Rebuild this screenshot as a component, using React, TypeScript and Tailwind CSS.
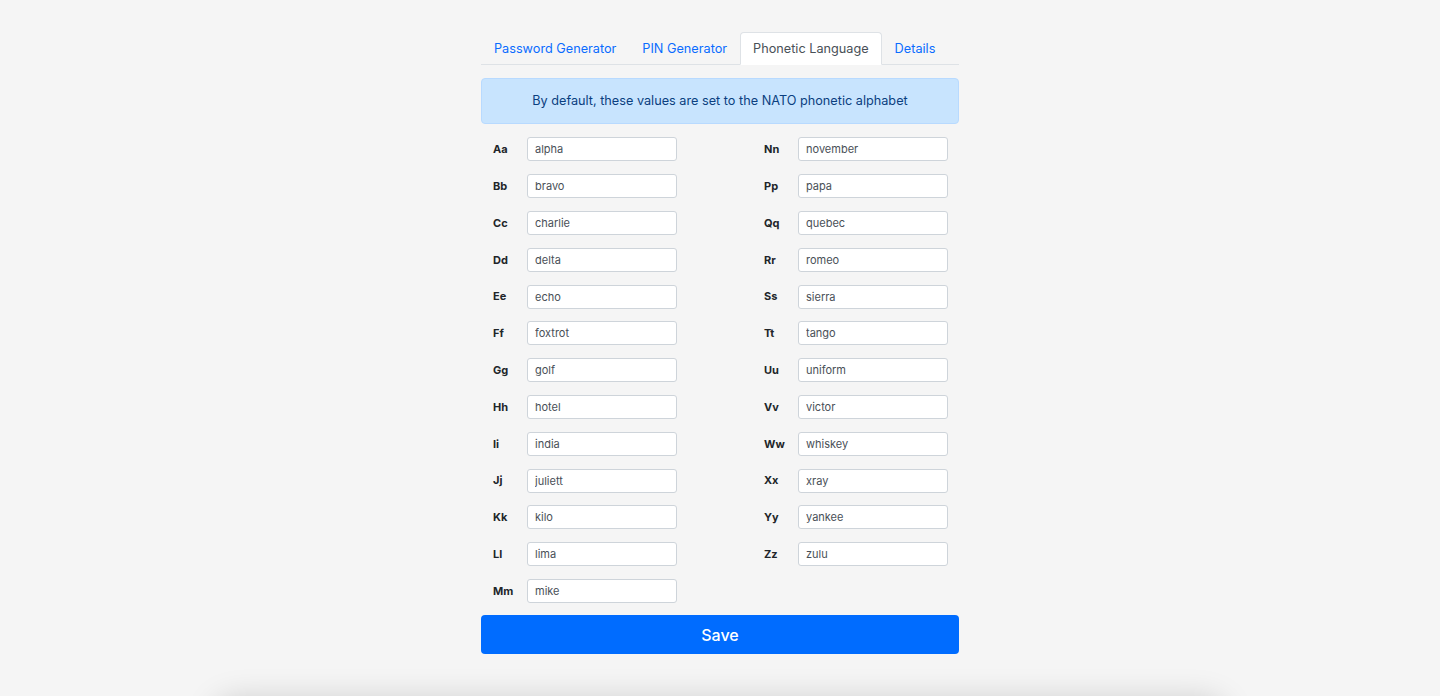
import { useState } from 'react';

const left = [
  ['Aa', 'alpha'], ['Bb', 'bravo'], ['Cc', 'charlie'], ['Dd', 'delta'], ['Ee', 'echo'],
  ['Ff', 'foxtrot'], ['Gg', 'golf'], ['Hh', 'hotel'], ['Ii', 'india'], ['Jj', 'juliett'],
  ['Kk', 'kilo'], ['Ll', 'lima'], ['Mm', 'mike'],
];
const right = [
  ['Nn', 'november'], ['Pp', 'papa'], ['Qq', 'quebec'], ['Rr', 'romeo'], ['Ss', 'sierra'],
  ['Tt', 'tango'], ['Uu', 'uniform'], ['Vv', 'victor'], ['Ww', 'whiskey'], ['Xx', 'xray'],
  ['Yy', 'yankee'], ['Zz', 'zulu'],
];

const tabs = ['Password Generator', 'PIN Generator', 'Phonetic Language', 'Details'];

function Row({ label, value }: { label: string; value: string }) {
  const [v, setV] = useState(value);
  return (
    <div className="flex h-[36.8px] items-center pl-3">
      <span className="w-[34px] text-[11px] font-bold text-[#212529]">{label}</span>
      <input
        value={v}
        onChange={(e) => setV(e.target.value)}
        className="h-6 w-[150px] rounded-[3px] border border-[#ced4da] bg-white px-[7px] text-[11px] text-[#495057] outline-none"
      />
    </div>
  );
}

export default function App() {
  const [active, setActive] = useState(2);
  return (
    <div
      className="h-[696px] overflow-hidden bg-[#f5f5f5]"
      style={{ fontFamily: 'Inter, "Liberation Sans", sans-serif' }}
    >
      <div className="mx-auto w-[478px] pt-8">
        <div className="flex border-b border-[#dee2e6] text-[12.7px]">
          {tabs.map((t, i) => (
            <button
              key={t}
              onClick={() => setActive(i)}
              className={`-mb-px h-[33px] shrink-0 whitespace-nowrap rounded-t-[4px] border px-[12px] ${
                active === i
                  ? 'border-[#dee2e6] border-b-white bg-white text-[#495057]'
                  : 'border-transparent text-[#0a6cff]'
              }`}
            >
              {t}
            </button>
          ))}
        </div>

        <div className="mt-[13px] flex h-[46px] items-center justify-center rounded-[4px] border border-[#b8daff] bg-[#c8e4fe] text-[12.7px] text-[#0b3f80]">
          By default, these values are set to the NATO phonetic alphabet
        </div>

        <div className="mt-[7px] flex">
          <div className="w-[271px]">
            {left.map(([l, v]) => (
              <Row key={l} label={l} value={v} />
            ))}
          </div>
          <div className="flex-1">
            {right.map(([l, v]) => (
              <Row key={l} label={l} value={v} />
            ))}
          </div>
        </div>

        <button className="mt-[6px] h-[39px] w-full rounded-[4px] bg-[#006cff] text-[16px] font-medium text-white">
          Save
        </button>
      </div>

      <div className="mx-[215px] mt-[46px] h-[100px] rounded-[20px] bg-[#f5f5f5] shadow-[0_0_32px_rgba(0,0,0,0.18)]" />
    </div>
  );
}
